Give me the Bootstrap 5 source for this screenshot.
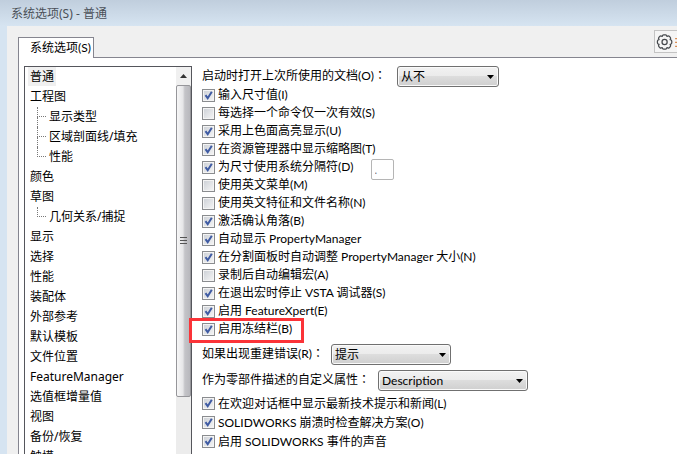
<!DOCTYPE html>
<html lang="zh-CN">
<head>
<meta charset="utf-8">
<meta name="viewport" content="width=device-width, initial-scale=1">
<title>系统选项(S) - 普通</title>
<link href="https://cdn.jsdelivr.net/npm/bootstrap@5.3.0/dist/css/bootstrap.min.css" rel="stylesheet">
<style>
body{font:12px/18px "Noto Sans","Noto Sans CJK SC",sans-serif;color:#000;background:#d6e4f1}
.titlebar{height:26px;padding:1px 11px 0;background:linear-gradient(#c0cedd,#d6e4f1);color:#4a5058}
.titlebar h1{font-size:12px;line-height:26px;font-weight:400}
.dialog-body{margin-left:7px;padding-left:11px;background:#f0f0f0;min-height:0}
.tab-strip{height:31px}
.tab-btn,.options,.options select{font-family:Lato,"Noto Sans CJK SC",sans-serif}
.tab-btn{height:21px;width:76px;padding:0 0 0 11px;border:1px solid #85858f;border-bottom:0;border-radius:0;background:#fff;text-align:left;margin-bottom:-1px;position:relative;z-index:1;font-size:12px;line-height:18px;color:#000}
.tool-box{height:23px;width:23px;margin-top:4px;padding:0 0 0 1px;border:1px solid #c3c3c3;border-right:0;background:#f5f5f5;border-radius:0}
.pane{border:1px solid #85858f;border-width:1px 0 0 1px;background:#fff;padding:8px 0 0 5px;min-height:0}
.tree-box{width:168px;border:1px solid #55565c;border-bottom:0;min-height:0}
.tree{line-height:20px}
.tree a{color:#000;text-decoration:none;padding-right:1px}
.tree>li{padding-left:5px}
.tree .current{background:#f0f0f0;margin-left:-2px;padding:1px 2px}
.tree ul{margin-left:7px}
.tree ul li{display:flex;height:20px}
.twig{width:12px;display:flex;flex-direction:column}
.twig::before{content:"";height:10px;width:9px;border-left:1px dotted #777;border-bottom:1px dotted #777}
.twig::after{content:"";height:10px}
li:not(:last-child)>.twig::after{border-left:1px dotted #777}
.scroll-track{width:15px;background:#ececec}
.scroll-up{height:18px;width:15px;padding:0;border:0;background:#f0f0f0}
.scroll-thumb{height:312px;border:1px solid #96969a;border-radius:2px;background:linear-gradient(90deg,#f7f7f7,#e6e6e8 45%,#c4c4c8 60%,#b8b8bd)}
.options{padding-left:10px}
.opt{height:18px;white-space:nowrap}
.opt-tail .opt{height:19px}
.opt label{padding-left:3px}
.opt input[type=checkbox]{appearance:none;width:13px;height:13px;margin:0;border:1px solid #8a8c8f;box-shadow:inset 0 0 0 1px #f4f4f4;background:linear-gradient(135deg,#cbcfd5,#f6f6f6)}
.opt input[type=checkbox]:checked{background:url("data:image/svg+xml,%3Csvg xmlns='http://www.w3.org/2000/svg' viewBox='0 0 11 11'%3E%3Cpath d='M2.5 5.2L4.7 8.2 8.8 1.8' fill='none' stroke='%233f5ba3' stroke-width='2'/%3E%3C/svg%3E"),linear-gradient(135deg,#cbcfd5,#f6f6f6)}
.sep-box{width:23px;height:21px;margin:2px 0 -2px 17px;padding:0 0 0 3px;border:1px solid #b5b5b5;border-radius:2px;color:#777;font-size:11px;line-height:18px}
.marked{position:relative}
.marked::after{content:"";position:absolute;left:-13px;top:-2px;width:115px;height:25px;border:3px solid #fb3338;pointer-events:none}
.pick{height:20px}
.pick+.pick,.opt+.pick{margin-top:6px}
.pick .colon{font-family:"Noto Sans CJK TC",sans-serif}
.pick select{appearance:none;height:21px;padding:0 3px;border:1px solid #707070;border-radius:3px;color:#000;line-height:18px;box-shadow:inset 0 0 0 1px #fafafa;background:url("data:image/svg+xml,%3Csvg xmlns='http://www.w3.org/2000/svg' width='7' height='4'%3E%3Cpath d='M0 0h7L3.500 4z'/%3E%3C/svg%3E") right 4px center no-repeat,linear-gradient(#f2f2f2,#ebebeb 48%,#dddddd 50%,#cfcfcf)}
.w-open{width:195px}.w-err{width:129px}.w-prop{width:176px}
.s-open{width:102px}.s-err{width:120px}.s-prop{width:150px}
</style>
</head>
<body class="vh-100 overflow-hidden d-flex flex-column">
<header class="titlebar flex-shrink-0"><h1 class="m-0">系统选项(S) - 普通</h1></header>
<main class="dialog-body flex-grow-1 d-flex flex-column">
  <div class="tab-strip d-flex justify-content-between flex-shrink-0">
    <button class="tab-btn align-self-end" type="button">系统选项(S)</button>
    <button class="tool-box d-flex align-items-center" type="button" aria-label="选项">
      <svg width="22" height="18" viewBox="0 0 22 18" fill="none" stroke="#45484c" stroke-width="1.300"><path d="M6.500 3.200Q6.800 1.500 8 1.500h2q1.200 0 1.500 1.700 1.500-1 2.300-.2l1.200 1.200q.8.800-.2 2.300 1.700.3 1.700 1.500v2q0 1.200-1.700 1.500 1 1.500.2 2.300l-1.200 1.200q-.8.800-2.300-.2-.3 1.700-1.500 1.700H8q-1.200 0-1.500-1.700-1.500 1-2.300.2L3 13.800q-.8-.8.2-2.300-1.700-.3-1.700-1.500V8q0-1.200 1.700-1.500-1-1.500-.2-2.300L4.200 3q.8-.8 2.300.2z" stroke-linejoin="round"/><circle cx="9" cy="9" r="2.700"/><path d="M20 5.500h2M20 9.500h2M20 13.500h2" stroke="#d98a50"/></svg>
    </button>
  </div>
  <div class="pane flex-grow-1 d-flex">
    <nav class="tree-box d-flex flex-shrink-0 overflow-hidden" aria-label="选项类别">
      <ul class="tree list-unstyled m-0 flex-grow-1">
        <li><a class="current" href="#">普通</a></li>
        <li><a href="#">工程图</a>
          <ul class="list-unstyled">
            <li><span class="twig"></span><a href="#">显示类型</a></li>
            <li><span class="twig"></span><a href="#">区域剖面线/填充</a></li>
            <li><span class="twig"></span><a href="#">性能</a></li>
          </ul></li>
        <li><a href="#">颜色</a></li>
        <li><a href="#">草图</a>
          <ul class="list-unstyled"><li><span class="twig"></span><a href="#">几何关系/捕捉</a></li></ul></li>
        <li><a href="#">显示</a></li>
        <li><a href="#">选择</a></li>
        <li><a href="#">性能</a></li>
        <li><a href="#">装配体</a></li>
        <li><a href="#">外部参考</a></li>
        <li><a href="#">默认模板</a></li>
        <li><a href="#">文件位置</a></li>
        <li><a href="#">FeatureManager</a></li>
        <li><a href="#">选值框增量值</a></li>
        <li><a href="#">视图</a></li>
        <li><a href="#">备份/恢复</a></li>
        <li><a href="#">触摸</a></li>
      </ul>
      <div class="scroll-track flex-shrink-0">
        <button class="scroll-up d-flex align-items-center justify-content-center" type="button" aria-label="向上滚动"><svg width="7" height="4"><path d="M0 4h7L3.500 0z" fill="#333"/></svg></button>
        <div class="scroll-thumb d-flex align-items-center justify-content-center"><svg width="7" height="8" stroke="#555"><path d="M0 .5h7M0 3.500h7M0 6.500h7"/></svg></div>
      </div>
    </nav>
    <form class="options flex-grow-1">
      <div class="pick d-flex"><label class="w-open" for="open">启动时打开上次所使用的文档(O)<span class="colon" lang="zh-TW">：</span></label><select class="s-open" id="open"><option>从不</option></select></div>
      <div class="opt d-flex align-items-center"><input type="checkbox" id="c1" checked><label for="c1">输入尺寸值(I)</label></div>
      <div class="opt d-flex align-items-center"><input type="checkbox" id="c2"><label for="c2">每选择一个命令仅一次有效(S)</label></div>
      <div class="opt d-flex align-items-center"><input type="checkbox" id="c3" checked><label for="c3">采用上色面高亮显示(U)</label></div>
      <div class="opt d-flex align-items-center"><input type="checkbox" id="c4" checked><label for="c4">在资源管理器中显示缩略图(T)</label></div>
      <div class="opt d-flex align-items-center"><input type="checkbox" id="c5" checked><label for="c5">为尺寸使用系统分隔符(D)</label><input class="sep-box" type="text" value="." aria-label="分隔符"></div>
      <div class="opt d-flex align-items-center"><input type="checkbox" id="c6"><label for="c6">使用英文菜单(M)</label></div>
      <div class="opt d-flex align-items-center"><input type="checkbox" id="c7"><label for="c7">使用英文特征和文件名称(N)</label></div>
      <div class="opt d-flex align-items-center"><input type="checkbox" id="c8" checked><label for="c8">激活确认角落(B)</label></div>
      <div class="opt d-flex align-items-center"><input type="checkbox" id="c9" checked><label for="c9">自动显示 PropertyManager</label></div>
      <div class="opt d-flex align-items-center"><input type="checkbox" id="c10" checked><label for="c10">在分割面板时自动调整 PropertyManager 大小(N)</label></div>
      <div class="opt d-flex align-items-center"><input type="checkbox" id="c11"><label for="c11">录制后自动编辑宏(A)</label></div>
      <div class="opt d-flex align-items-center"><input type="checkbox" id="c12" checked><label for="c12">在退出宏时停止 VSTA 调试器(S)</label></div>
      <div class="opt d-flex align-items-center"><input type="checkbox" id="c13" checked><label for="c13">启用 FeatureXpert(E)</label></div>
      <div class="opt marked d-flex align-items-center"><input type="checkbox" id="c14" checked><label for="c14">启用冻结栏(B)</label></div>
      <div class="pick d-flex"><label class="w-err" for="err">如果出现重建错误(R)<span class="colon" lang="zh-TW">：</span></label><select class="s-err" id="err"><option>提示</option></select></div>
      <div class="pick d-flex"><label class="w-prop" for="prop">作为零部件描述的自定义属性<span class="colon" lang="zh-TW">：</span></label><select class="s-prop" id="prop"><option>Description</option></select></div>
      <div class="opt-tail mt-1">
        <div class="opt d-flex align-items-center"><input type="checkbox" id="c15" checked><label for="c15">在欢迎对话框中显示最新技术提示和新闻(L)</label></div>
        <div class="opt d-flex align-items-center"><input type="checkbox" id="c16" checked><label for="c16">SOLIDWORKS 崩溃时检查解决方案(O)</label></div>
        <div class="opt d-flex align-items-center"><input type="checkbox" id="c17" checked><label for="c17">启用 SOLIDWORKS 事件的声音</label></div>
      </div>
    </form>
  </div>
</main>
<script src="https://cdn.jsdelivr.net/npm/bootstrap@5.3.0/dist/js/bootstrap.bundle.min.js"></script>
</body>
</html>
